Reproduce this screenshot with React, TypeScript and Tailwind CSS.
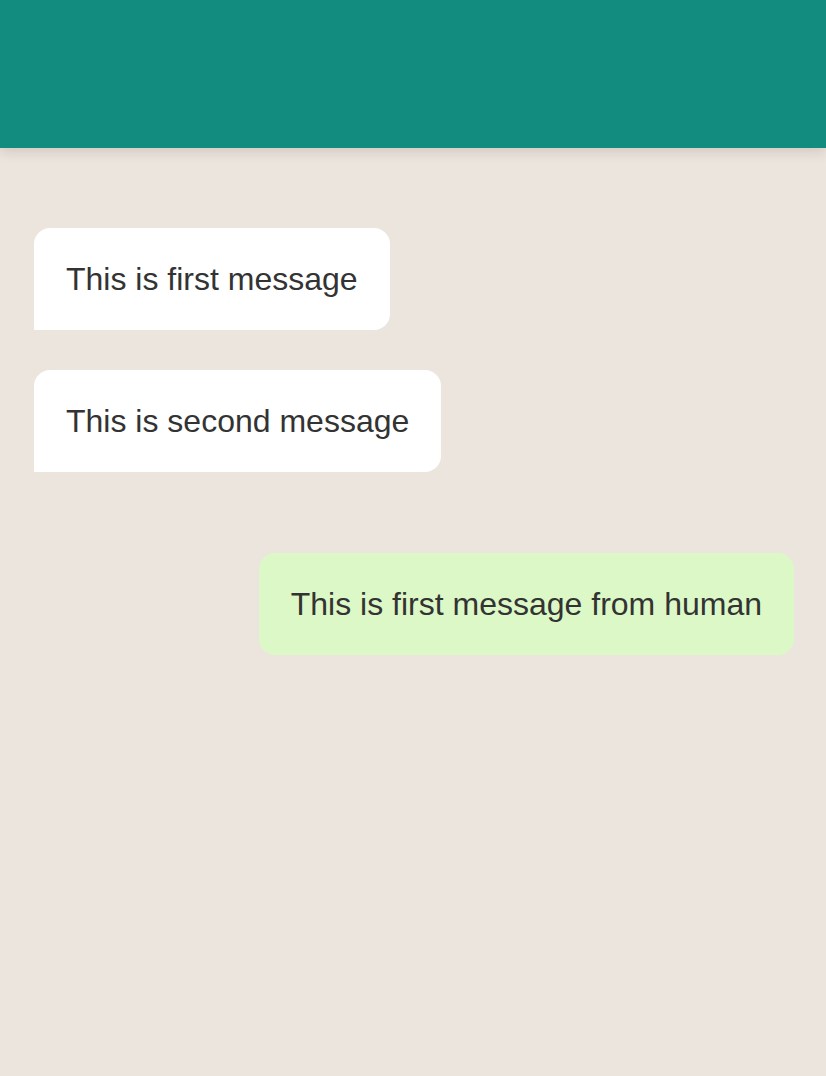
export default function App() {
  const bot = ["This is first message", "This is second message"];

  return (
    <div className="min-h-screen bg-[#ece5dd] font-['Liberation_Sans',Arial,sans-serif] text-[#333]">
      {/* Header */}
      <header className="h-[148px] bg-[#128c7e] shadow-[0_4px_12px_rgba(0,0,0,0.12)]" />

      <main className="flex flex-col pt-[80px] pl-[34px] pr-[32px]">
        {/* Bot messages */}
        <div className="flex flex-col items-start gap-[40px]">
          {bot.map((text) => (
            <div
              key={text}
              className="bg-white rounded-2xl rounded-bl-none px-8 py-8 text-[32px] leading-[38px]"
            >
              {text}
            </div>
          ))}
        </div>

        {/* Human message */}
        <div className="flex justify-end mt-[81px]">
          <div className="bg-[#dcf8c6] rounded-2xl px-8 py-8 text-[32px] leading-[38px]">
            This is first message from human
          </div>
        </div>
      </main>
    </div>
  );
}
